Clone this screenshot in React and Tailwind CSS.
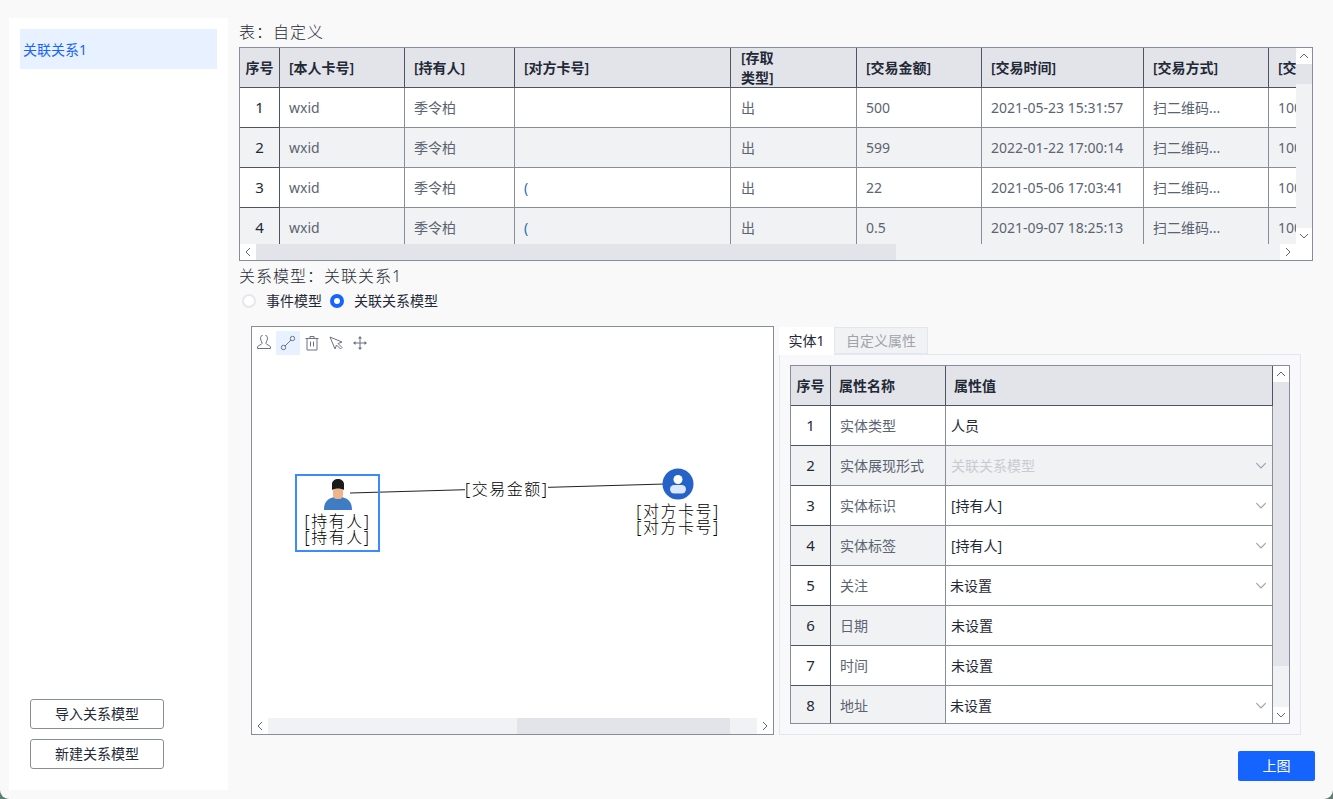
const cols = [
    { label: '[本人卡号]', key: 'card' },
    { label: '[持有人]', key: 'owner' },
    { label: '[对方卡号]', key: 'other' },
    { label: '[存取', label2: '类型]', key: 'dir' },
    { label: '[交易金额]', key: 'amount' },
    { label: '[交易时间]', key: 'time' },
    { label: '[交易方式]', key: 'method' },
    { label: '[交易状态]', key: 'state' },
];

const rows = [
    { card: 'wxid', owner: '季令柏', other: '', dir: '出', amount: '500', time: '2021-05-23 15:31:57', method: '扫二维码...', state: '100000' },
    { card: 'wxid', owner: '季令柏', other: '', dir: '出', amount: '599', time: '2022-01-22 17:00:14', method: '扫二维码...', state: '100000' },
    { card: 'wxid', owner: '季令柏', other: '(', dir: '出', amount: '22', time: '2021-05-06 17:03:41', method: '扫二维码...', state: '100000' },
    { card: 'wxid', owner: '季令柏', other: '(', dir: '出', amount: '0.5', time: '2021-09-07 18:25:13', method: '扫二维码...', state: '100000' },
];

const attrs = [
    { name: '实体类型', value: '人员' },
    { name: '实体展现形式', value: '关联关系模型', select: true, disabled: true },
    { name: '实体标识', value: '[持有人]', select: true },
    { name: '实体标签', value: '[持有人]', select: true },
    { name: '关注', value: '未设置', select: true, tight: true },
    { name: '日期', value: '未设置' },
    { name: '时间', value: '未设置' },
    { name: '地址', value: '未设置', select: true, tight: true },
];

const mainGrid = 'grid grid-cols-[40px_125px_110px_216px_126px_125px_162px_125px_120px] w-[1149px]';
const attrGrid = 'grid grid-cols-[40px_115px_327px]';

const Chevron = ({ dir = 'down', className = 'text-[#5f6672]' }) => {
    const points = {
        down: '1,1 5,5 9,1',
        up: '1,5 5,1 9,5',
        left: '5,1 1,5 5,9',
        right: '1,1 5,5 1,9',
    };
    const vertical = dir === 'up' || dir === 'down';
    return (
        <svg width={vertical ? 10 : 6} height={vertical ? 6 : 10} viewBox={vertical ? '0 0 10 6' : '0 0 6 10'} className={className}>
            <polyline points={points[dir]} fill="none" stroke="currentColor" strokeWidth="1" />
        </svg>
    );
};

const ScrollBtn = ({ dir }) => (
    <div className="w-4 h-4 shrink-0 bg-white flex items-center justify-center">
        <Chevron dir={dir} />
    </div>
);

const SideButton = ({ children }) => (
    <button className="w-[134px] h-[30px] border border-[#868e9b] rounded-[3px] bg-white text-sm text-[#1f2937]">
        {children}
    </button>
);

const ToolIcon = ({ active, children }) => (
    <div className={`w-6 h-6 flex items-center justify-center ${active ? 'bg-[#e8f1ff]' : ''}`}>
        <svg width="16" height="16" viewBox="0 0 16 16" fill="none" stroke="#6b7280" strokeWidth="1">
            {children}
        </svg>
    </div>
);

const Radio = ({ checked, label }) => (
    <label className="flex items-center gap-[10px] text-sm text-[#1f2937]">
        {checked ? (
            <span className="w-[14px] h-[14px] rounded-full border-[4px] border-[#1664ff] bg-white" />
        ) : (
            <span className="w-[14px] h-[14px] rounded-full border-2 border-[#e5e7ec] bg-white" />
        )}
        {label}
    </label>
);

const AttrRow = ({ row, i }) => {
    const even = i % 2 === 1;
    return (
        <>
            <div className={`h-10 flex items-center justify-center border-r border-b border-[#4b5563] text-[15px] text-[#1f2937] ${even ? 'bg-[#f1f2f4]' : 'bg-white'}`}>{i + 1}</div>
            <div className={`h-10 flex items-center pl-[9px] border-r border-b border-[#868e9b] text-sm text-[#5b6472] ${even ? 'bg-[#f1f2f4]' : 'bg-white'}`}>{row.name}</div>
            <div className={`h-10 flex items-center justify-between pr-[5px] border-r border-b border-[#868e9b] text-sm ${row.tight ? 'pl-1' : 'pl-[5px]'} ${row.disabled ? 'bg-[#f1f2f4] text-[#c9cbd0]' : 'bg-white text-[#1f2937]'}`}>
                <span>{row.value}</span>
                {row.select && <Chevron className="text-[#9aa0aa] w-[12px] h-[7px]" />}
            </div>
        </>
    );
};

const App = () => {
    return (
        <div className="w-[1333px] h-[799px] overflow-hidden bg-[#5f7d72]">
            <div className="w-[1333px] h-[799px] rounded-b-[9px] overflow-hidden bg-[#f9f9f9] flex pl-[9px] pt-[18px] pb-[9px] font-['Noto_Sans','Noto_Sans_CJK_SC',sans-serif]">
                <aside className="w-[219px] shrink-0 bg-white flex flex-col justify-between pt-[11px] pb-[21px]">
                    <div className="ml-[11px] w-[197px] h-10 bg-[#e8f1ff] flex items-center pl-[3px] pt-[1px] text-sm text-[#1664ff]">关联关系1</div>
                    <div className="ml-[21px] flex flex-col gap-[10px]">
                        <SideButton>导入关系模型</SideButton>
                        <SideButton>新建关系模型</SideButton>
                    </div>
                </aside>

                <main className="flex-1 pl-[11px] flex flex-col -mt-[18px]">
                    <div className="h-[47px] pt-[20px] text-base font-light tracking-[1px] leading-6 text-[#1f2937]">表：自定义</div>

                    <div className="w-[1074px] h-[214px] border border-[#868e9b] flex flex-col bg-white">
                        <div className="flex h-[196px]">
                            <div className="w-[1056px] overflow-hidden">
                                <div className={`${mainGrid} bg-[#e3e4e9] text-sm font-semibold text-[#1f2937]`}>
                                    <div className="h-10 flex items-center justify-center border-r border-b border-[#4b5563]">序号</div>
                                    {cols.map(col => (
                                        <div key={col.key} className={`h-10 flex items-center border-r border-b border-[#4b5563] leading-5 ${col.key === 'dir' ? 'pl-[10px]' : 'pl-[9px]'}`}>
                                            <span>{col.label}{col.label2 && <><br />{col.label2}</>}</span>
                                        </div>
                                    ))}
                                </div>
                                {rows.map((row, i) => (
                                    <div key={i} className={`${mainGrid} text-sm text-[#5b6472] ${i % 2 ? 'bg-[#f1f2f4]' : 'bg-white'}`}>
                                        <div className="h-10 flex items-center justify-center border-r border-b border-[#4b5563] text-[15px] text-[#1f2937]">{i + 1}</div>
                                        {cols.map(col => (
                                            <div key={col.key} className={`h-10 flex items-center border-r border-b border-[#868e9b] whitespace-nowrap ${col.key === 'dir' ? 'pl-[10px]' : 'pl-[9px]'} ${col.key === 'other' ? 'text-[#2b6cb0]' : ''}`}>
                                                {row[col.key]}
                                            </div>
                                        ))}
                                    </div>
                                ))}
                            </div>
                            <div className="w-4 flex flex-col bg-[#f1f2f4]">
                                <ScrollBtn dir="up" />
                                <div className="h-5 bg-[#e3e4e9]" />
                                <div className="flex-1" />
                                <ScrollBtn dir="down" />
                            </div>
                        </div>
                        <div className="flex h-4 bg-[#f1f2f4]">
                            <ScrollBtn dir="left" />
                            <div className="w-[640px] bg-[#e3e4e9]" />
                            <div className="flex-1" />
                            <ScrollBtn dir="right" />
                            <div className="w-4 bg-white" />
                        </div>
                    </div>

                    <div className="mt-[3px] h-6 text-base font-light tracking-[1px] leading-6 text-[#1f2937]">关系模型：关联关系1</div>
                    <div className="mt-[1px] flex items-center gap-2 pl-[3px] h-[24px]">
                        <Radio label="事件模型" />
                        <Radio checked label="关联关系模型" />
                    </div>

                    <div className="mt-[13px] flex">
                        <div className="ml-3 w-[523px] h-[409px] border border-[#868e9b] bg-white relative flex flex-col">
                            <div className="flex h-[32px] pt-[4px]">
                                <ToolIcon>
                                    <path d="M5 5.5a3.5 4 0 1 1 6 0c-.6 1.2-1 1.8-1 3 0 1.2 4 1.6 4.5 3.5v1.5h-13V12C2 10.100 6 9.700 6 8.500c0-1.200-.4-1.800-1-3z" />
                                </ToolIcon>
                                <ToolIcon active>
                                    <circle cx="3.500" cy="12.500" r="2.200" />
                                    <circle cx="12.500" cy="3.500" r="2.200" />
                                    <path d="M5 11l6-6" />
                                </ToolIcon>
                                <ToolIcon>
                                    <path d="M1.500 3.500h13M6 3.500V1.500h4v2M3 3.500v11.500h10V3.500M6.500 6.500v5M9.500 6.500v5" />
                                </ToolIcon>
                                <ToolIcon>
                                    <path d="M2 2l12 5-4 1.500 4 4-1.500 1.500-4-4-1.500 4z" />
                                </ToolIcon>
                                <ToolIcon>
                                    <path d="M8 2v12M2 8h12" />
                                    <path d="M8 1l2 2.500H6zM8 15l2-2.500H6zM1 8l2.500-2v4zM15 8l-2.500-2v4z" fill="#6b7280" stroke="none" />
                                </ToolIcon>
                            </div>

                            <svg className="absolute left-0 top-0" width="521" height="391">
                                <line x1="98" y1="166" x2="413" y2="157" stroke="#222" strokeWidth="1" />
                            </svg>

                            <div className="absolute left-[213px] top-[152px] bg-white text-base font-light leading-5 tracking-[1.5px] text-black">[交易金额]</div>

                            <div className="absolute left-[43px] top-[147px] w-[85px] h-[78px] border-2 border-[#3b8bff] flex flex-col items-center pt-[2px] text-base font-light leading-4 tracking-[1.5px] text-black">
                                <svg width="30" height="32" viewBox="0 0 30 32">
                                    <path d="M1 32c0-9 4-11 10-13l4 2 4-2c6 2 10 4 10 13z" fill="#3f7cc4" />
                                    <rect x="10" y="9" width="10" height="12" rx="4" fill="#eeb48c" />
                                    <path d="M9 12V6c0-3 3-5 6-5s6 2 6 5v6c-3-2-9-2-12 0z" fill="#1a1a1a" />
                                </svg>
                                <span className="mt-[3px]">[持有人]</span>
                                <span>[持有人]</span>
                            </div>

                            <div className="absolute left-[378px] top-[141px] w-[96px] flex flex-col items-center text-base font-light leading-4 tracking-[1.5px] text-black">
                                <svg width="32" height="32" viewBox="0 0 32 32">
                                    <circle cx="16" cy="16" r="15.500" fill="#2563c9" />
                                    <circle cx="16" cy="11.500" r="4.500" fill="#fff" />
                                    <rect x="8" y="17" width="16" height="8.500" rx="4.200" fill="#dbe8fb" />
                                </svg>
                                <span className="mt-[3px]">[对方卡号]</span>
                                <span>[对方卡号]</span>
                            </div>

                            <div className="mt-auto flex h-4 bg-[#f1f2f4]">
                                <ScrollBtn dir="left" />
                                <div className="w-[249px]" />
                                <div className="w-[213px] bg-[#e3e4e9]" />
                                <div className="flex-1" />
                                <ScrollBtn dir="right" />
                            </div>
                        </div>

                        <div className="ml-[5px] w-[522px] flex flex-col">
                            <div className="flex h-[28px] items-end text-sm">
                                <div className="w-[55px] bg-white flex items-center justify-center text-[#1f2937] relative z-10 h-[28px] -mb-px">实体1</div>
                                <div className="w-[94px] h-[27px] bg-[#f1f2f4] border border-[#e5e7ee] flex items-center justify-center text-[#a0a3a9]">自定义属性</div>
                            </div>
                            <div className="h-[381px] border border-[#e5e7ee] p-[10px] bg-[#f9f9fb]">
                                <div className="w-[500px] h-[359px] border border-[#868e9b] flex bg-white">
                                    <div className="w-[482px] h-[357px] overflow-hidden">
                                        <div className={`${attrGrid} bg-[#e3e4e9] text-sm font-semibold text-[#1f2937]`}>
                                            <div className="h-10 flex items-center justify-center border-r border-b border-[#4b5563]">序号</div>
                                            <div className="h-10 flex items-center pl-[8px] border-r border-b border-[#4b5563]">属性名称</div>
                                            <div className="h-10 flex items-center pl-[8px] border-r border-b border-[#4b5563]">属性值</div>
                                        </div>
                                        {attrs.map((row, i) => (
                                            <div key={row.name} className={attrGrid}>
                                                <AttrRow row={row} i={i} />
                                            </div>
                                        ))}
                                    </div>
                                    <div className="w-4 flex flex-col bg-[#f1f2f4]">
                                        <ScrollBtn dir="up" />
                                        <div className="h-[284px] bg-[#e3e4e9]" />
                                        <div className="flex-1" />
                                        <ScrollBtn dir="down" />
                                    </div>
                                </div>
                            </div>
                        </div>
                    </div>

                    <div className="mt-4 w-[1076px] flex justify-end">
                        <button className="w-[77px] h-[30px] bg-[#1664ff] rounded-[2px] text-sm text-white">上图</button>
                    </div>
                </main>
            </div>
        </div>
    );
};

export default App;
